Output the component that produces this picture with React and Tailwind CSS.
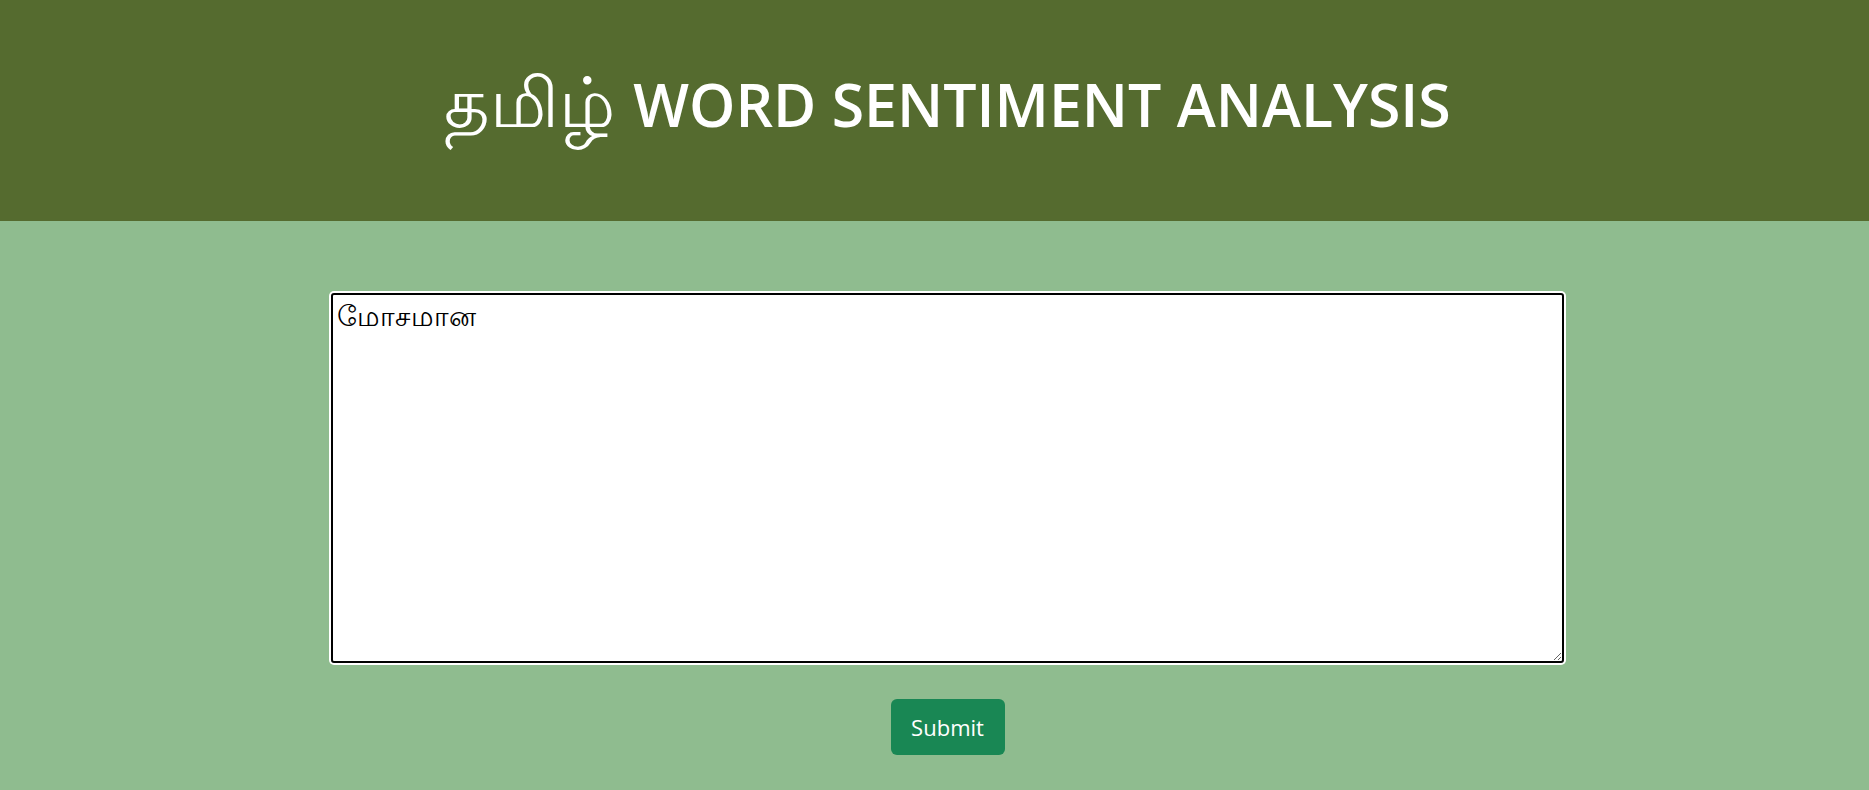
export default function App() {
  return (
    <div className="min-h-[790px] bg-[#8FBC8F]" style={{ fontFamily: '"Open Sans", "Noto Sans", sans-serif' }}>
      <header className="h-[221px] bg-[#556B2F] flex items-center justify-center pl-[26px]">
        <h1 className="text-white text-[59px] leading-none pb-[22px] flex items-baseline gap-[18px]">
          <span className="font-medium text-[70px]">தமிழ்</span>
          <span className="font-semibold">WORD SENTIMENT ANALYSIS</span>
        </h1>
      </header>
      <main className="flex flex-col items-center pl-[26px] pt-[72px]">
        <textarea
          defaultValue="மோசமான"
          className="w-[1233px] h-[370px] bg-white border-2 border-black rounded-[3px] ring-2 ring-white px-[4px] py-[3px] text-[28px] leading-[34px] text-black outline-none resize-y"
          style={{ fontFamily: '"Noto Sans", sans-serif' }}
        />
        <button className="mt-[36px] w-[114px] h-[56px] rounded-[6px] bg-[#198754] text-white text-[22px]">
          Submit
        </button>
      </main>
    </div>
  );
}
